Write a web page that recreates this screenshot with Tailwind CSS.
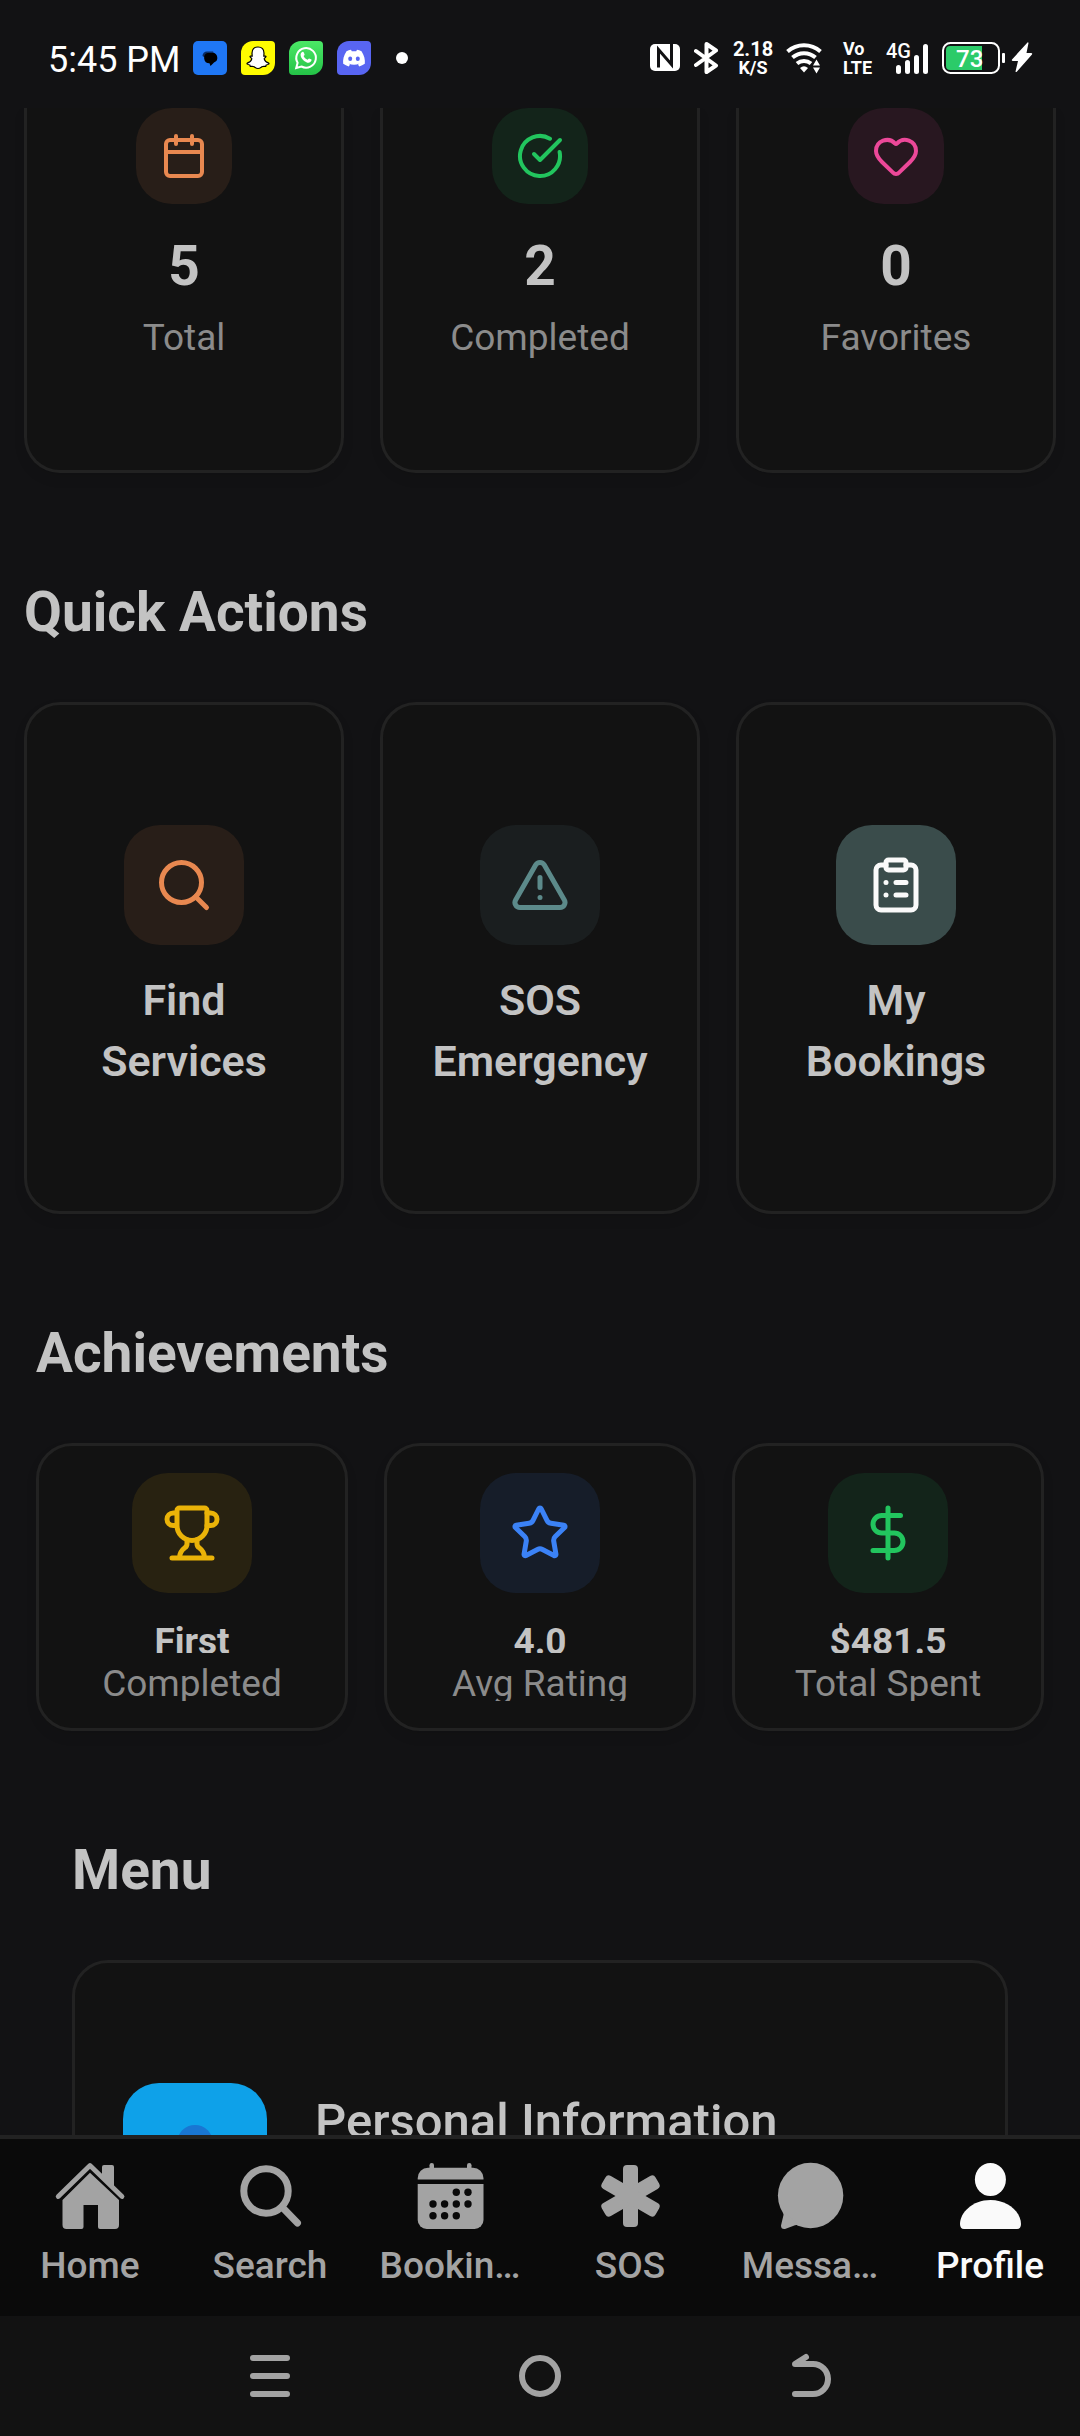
<!DOCTYPE html>
<html lang="en">
<head>
<meta charset="utf-8">
<meta name="viewport" content="width=device-width, initial-scale=1">
<title>Profile</title>
<script src="https://cdn.jsdelivr.net/npm/@tailwindcss/browser@4"></script>
</head>
<body class="flex h-screen flex-col overflow-hidden bg-[#121214] font-['Roboto',sans-serif] text-[#c3c3c3]">

<!-- Status bar -->
<header class="flex h-[108px] shrink-0 items-center justify-between pt-2 pr-[47px] pl-12 text-white">
  <div class="flex items-center gap-[14px]">
    <time class="w-[131px] pt-1 text-[36px] leading-[42px] whitespace-nowrap">5:45 PM</time>
    <svg class="h-[34px] w-[34px]" viewBox="0 0 34 34"><rect width="34" height="34" rx="5" fill="#1f77f5"/><path d="M9.500 15a4.500 4.500 0 0 1 4.500-4.500h6l.8 1.300h-6.300l-3 4.500z" fill="#0a2a60"/><path d="M15 11.800h4.500a5 5 0 0 1 1.500 9.700l-3.500 3.500-1-2.800a5.300 5.300 0 0 1-1.500-10.400z" fill="#000"/></svg>
    <svg class="h-[34px] w-[34px]" viewBox="0 0 34 34"><path d="M12 0H30a4 4 0 0 1 4 4V22a12 12 0 0 1-12 12H4a4 4 0 0 1-4-4V12A12 12 0 0 1 12 0z" fill="#fffc00"/><path d="M17 6c4 0 6 2.500 6 6.200l-.2 3c.8.2 1.900-.6 2.200.2.400 1-2 1.400-1.800 2.400.6 2.200 2.500 3.800 4.600 4.400.6.400-.2 1.400-2.600 1.800l-.5 1.400c-1.200.2-2.400-.4-3.900.4-1.200.8-2.200 1.700-3.800 1.700s-2.600-.9-3.800-1.700c-1.500-.8-2.700-.2-3.900-.4L8.800 24c-2.400-.4-3.200-1.400-2.600-1.800 2.100-.6 4-2.200 4.600-4.400.2-1-2.200-1.400-1.800-2.400.3-.8 1.400 0 2.200-.2l-.2-3C11 8.500 13 6 17 6z" fill="#fff" stroke="#000" stroke-width="1.200"/></svg>
    <svg class="h-[34px] w-[34px]" viewBox="0 0 34 34"><defs><linearGradient id="wa" x2="0" y2="1"><stop stop-color="#4be866"/><stop offset="1" stop-color="#24c247"/></linearGradient></defs><path d="M12 0H30a4 4 0 0 1 4 4V22a12 12 0 0 1-12 12H4a4 4 0 0 1-4-4V12A12 12 0 0 1 12 0z" fill="url(#wa)"/><path d="M7.200 27l1.400-5.200a9.800 9.800 0 1 1 3.800 3.700z" fill="none" stroke="#fff" stroke-width="2"/><path d="M12.500 11.500c1-1.200 2-1 2.400.2l.7 1.700c.1.600-.8 1.300-1 1.700.8 1.700 2 2.800 3.900 3.600.6-.3 1.100-1.400 1.600-1.300l2.400 1.200c.5.800-.8 3.100-2.900 3.200-3.200-.1-8-4.400-8-7.900 0-.9.400-1.900.9-2.400z" fill="#fff"/></svg>
    <svg class="h-[34px] w-[34px]" viewBox="0 0 34 34"><path d="M12 0H30a4 4 0 0 1 4 4V22a12 12 0 0 1-12 12H4a4 4 0 0 1-4-4V12A12 12 0 0 1 12 0z" fill="#5865f2"/><path d="M9.500 10.200A18 18 0 0 1 14 8.800l.8 1.500a17 17 0 0 1 4.400 0L20 8.800a18 18 0 0 1 4.500 1.400c2.800 4.200 3.800 8.300 3.300 12.600a18 18 0 0 1-5.600 2.700l-1.200-2 1.500-.9c-3.600 1.600-7.400 1.600-11 0l1.500.9-1.200 2a18 18 0 0 1-5.600-2.700c-.5-4.300.5-8.400 3.300-12.600z" fill="#fff"/><ellipse cx="13.200" cy="17.800" rx="2" ry="2.300" fill="#5865f2"/><ellipse cx="20.800" cy="17.800" rx="2" ry="2.300" fill="#5865f2"/></svg>
    <span class="ml-[11px] h-3 w-3 rounded-full bg-white"></span>
  </div>

  <div class="flex items-center gap-[14px]">
    <svg class="h-8 w-[30px]" viewBox="0 0 30 32"><rect y="2" width="30" height="27" rx="5" fill="#fff"/><path d="M8.500 25.500V7.500L21.500 22.500V2" fill="none" stroke="#121214" stroke-width="3"/></svg>
    <svg class="h-8 w-[26px]" viewBox="0 0 26 32"><path d="M2 9l20 14.500-9.500 6.500V2l9.500 6.500L2 23" fill="none" stroke="#fff" stroke-width="4" stroke-linejoin="round" stroke-linecap="round"/></svg>
    <div class="flex w-[38px] flex-col items-center font-bold">
      <span class="text-[20px] leading-[18px]">2.18</span>
      <span class="text-[18px] leading-[19px]">K/S</span>
    </div>
    <svg class="h-8 w-[43px]" viewBox="0 0 43 32"><g fill="none" stroke="#fff" stroke-width="4"><path d="M1.500 9.500a25 25 0 0 1 33 0"/><path d="M6.500 15.500a17.500 17.500 0 0 1 23 0"/><path d="M11 21.500a11 11 0 0 1 14 0"/></g><path d="M14 26q4-3.500 8 0l-4 4.500z" fill="#fff"/><path d="M30.500 17.500l3.500 6h-7zM30.500 31.500l-3.500-6h7z" fill="#fff"/></svg>
    <div class="flex w-[29px] flex-col font-bold">
      <span class="text-[18px] leading-[18px]">Vo</span>
      <span class="text-[18px] leading-[19px]">LTE</span>
    </div>
    <div class="relative h-8 w-[42px]">
      <span class="absolute top-0 right-[17px] text-[20px] leading-[18px] font-medium">4G</span>
      <svg class="h-8 w-[42px]" viewBox="0 0 42 32" fill="#fff"><rect x="10" y="23" width="5" height="9" rx="2.500"/><rect x="19" y="18" width="5" height="14" rx="2.500"/><rect x="28" y="13" width="5" height="19" rx="2.500"/><rect x="37" y="2" width="5" height="30" rx="2.500"/></svg>
    </div>
    <div class="flex items-center gap-[6px]">
      <div class="relative h-8 w-[63px]">
        <svg class="h-8 w-[63px]" viewBox="0 0 63 32"><rect x="1" y="1" width="56" height="30" rx="7.500" fill="none" stroke="#fff" stroke-width="2"/><path d="M8 4H40V28H8a4 4 0 0 1-4-4V8a4 4 0 0 1 4-4z" fill="#2bcb69"/><rect x="60" y="11" width="3" height="10" rx="1" fill="#fff"/></svg>
        <span class="absolute top-0 left-[14px] text-[24px] leading-[34px] font-medium">73</span>
      </div>
      <svg class="h-8 w-[22px]" viewBox="0 0 22 32"><path d="M16.500 0.500L1 17.500q-.8 1.500 1 1.500h5L4.500 29.500q.5 1 1.500 0L21 12.500q.8-1.500-1-1.500h-4.500L17.500 1q-.2-1-1-.5z" fill="#fff"/></svg>
    </div>
  </div>
</header>

<!-- Scrolling content -->
<main class="min-h-0 flex-1 overflow-hidden">

  <section class="px-6">
    <ul class="grid grid-cols-3 gap-9">
      <li class="flex flex-col items-center rounded-b-[36px] border-3 border-t-0 border-[#222222] bg-[#121212] pb-[108px] shadow-[0_6px_12px_rgba(0,0,0,0.08)]">
        <span class="flex h-24 w-24 items-center justify-center rounded-[36px] bg-[#e88850]/10 text-[#e88850]">
          <svg class="h-12 w-12" viewBox="0 0 24 24" fill="none" stroke="currentColor" stroke-width="2" stroke-linecap="round" stroke-linejoin="round"><path d="M8 2v4M16 2v4"/><rect x="3" y="4" width="18" height="18" rx="2"/><path d="M3 10h18"/></svg>
        </span>
        <strong class="mt-[26px] text-[55px] leading-[72px] font-bold">5</strong>
        <span class="mt-3 text-[37px] leading-[48px] text-[#8b8b8b]">Total</span>
      </li>
      <li class="flex flex-col items-center rounded-b-[36px] border-3 border-t-0 border-[#222222] bg-[#121212] pb-[108px] shadow-[0_6px_12px_rgba(0,0,0,0.08)]">
        <span class="flex h-24 w-24 items-center justify-center rounded-[36px] bg-[#22c55e]/10 text-[#22c55e]">
          <svg class="h-12 w-12" viewBox="0 0 24 24" fill="none" stroke="currentColor" stroke-width="2" stroke-linecap="round" stroke-linejoin="round"><path d="M21.801 10A10 10 0 1 1 17 3.335"/><path d="m9 11 3 3L22 4"/></svg>
        </span>
        <strong class="mt-[26px] text-[55px] leading-[72px] font-bold">2</strong>
        <span class="mt-3 text-[37px] leading-[48px] text-[#8b8b8b]">Completed</span>
      </li>
      <li class="flex flex-col items-center rounded-b-[36px] border-3 border-t-0 border-[#222222] bg-[#121212] pb-[108px] shadow-[0_6px_12px_rgba(0,0,0,0.08)]">
        <span class="flex h-24 w-24 items-center justify-center rounded-[36px] bg-[#ec4899]/10 text-[#ec4899]">
          <svg class="h-12 w-12" viewBox="0 0 24 24" fill="none" stroke="currentColor" stroke-width="2" stroke-linecap="round" stroke-linejoin="round"><path d="M2 9.500a5.500 5.500 0 0 1 9.591-3.676.56.56 0 0 0 .818 0A5.490 5.490 0 0 1 22 9.500c0 2.290-1.500 4-3 5.500l-5.492 5.313a2 2 0 0 1-3 .019L5 15c-1.500-1.500-3-3.200-3-5.500"/></svg>
        </span>
        <strong class="mt-[26px] text-[55px] leading-[72px] font-bold">0</strong>
        <span class="mt-3 text-[37px] leading-[48px] text-[#8b8b8b]">Favorites</span>
      </li>
    </ul>
  </section>

  <section class="mt-[103px] px-6">
    <h2 class="text-[55px] leading-[72px] font-bold">Quick Actions</h2>
    <div class="mt-[54px] grid grid-cols-3 gap-9">
      <button type="button" class="flex flex-col items-center rounded-[36px] border-3 border-[#222222] bg-[#121212] px-9 pt-[120px] pb-[119px] shadow-[0_6px_12px_rgba(0,0,0,0.08)]">
        <span class="flex h-30 w-30 items-center justify-center rounded-[36px] bg-[#e88850]/10 text-[#e88850]">
          <svg class="h-15 w-15" viewBox="0 0 24 24" fill="none" stroke="currentColor" stroke-width="2" stroke-linecap="round" stroke-linejoin="round"><circle cx="11" cy="11" r="8"/><path d="m21 21-4.340-4.340"/></svg>
        </span>
        <span class="mt-[25px] text-[43px] leading-[61px] font-semibold">Find<br>Services</span>
      </button>
      <button type="button" class="flex flex-col items-center rounded-[36px] border-3 border-[#222222] bg-[#121212] px-9 pt-[120px] pb-[119px] shadow-[0_6px_12px_rgba(0,0,0,0.08)]">
        <span class="flex h-30 w-30 items-center justify-center rounded-[36px] bg-[#1a1e1f] text-[#5c8a8a]">
          <svg class="h-15 w-15" viewBox="0 0 24 24" fill="none" stroke="currentColor" stroke-width="2" stroke-linecap="round" stroke-linejoin="round"><path d="m21.730 18-8-14a2 2 0 0 0-3.480 0l-8 14A2 2 0 0 0 4 21h16a2 2 0 0 0 1.730-3"/><path d="M12 9v4M12 17h.01"/></svg>
        </span>
        <span class="mt-[25px] text-[43px] leading-[61px] font-semibold">SOS<br>Emergency</span>
      </button>
      <button type="button" class="flex flex-col items-center rounded-[36px] border-3 border-[#222222] bg-[#121212] px-9 pt-[120px] pb-[119px] shadow-[0_6px_12px_rgba(0,0,0,0.08)]">
        <span class="flex h-30 w-30 items-center justify-center rounded-[36px] bg-[#3a4c4b] text-[#fafafa]">
          <svg class="h-15 w-15" viewBox="0 0 24 24" fill="none" stroke="currentColor" stroke-width="2" stroke-linecap="round" stroke-linejoin="round"><rect x="8" y="2" width="8" height="4" rx="1"/><path d="M16 4h2a2 2 0 0 1 2 2v14a2 2 0 0 1-2 2H6a2 2 0 0 1-2-2V6a2 2 0 0 1 2-2h2M12 11h4M12 16h4M8 11h.01M8 16h.01"/></svg>
        </span>
        <span class="mt-[25px] text-[43px] leading-[61px] font-semibold">My<br>Bookings</span>
      </button>
    </div>
  </section>

  <section class="mt-[103px] px-9">
    <h2 class="text-[55px] leading-[72px] font-bold">Achievements</h2>
    <ul class="mt-[54px] grid grid-cols-3 gap-9">
      <li class="flex flex-col items-center rounded-[36px] border-3 border-[#222222] bg-[#121212] py-[27px] shadow-[0_6px_12px_rgba(0,0,0,0.08)]">
        <span class="flex h-30 w-30 items-center justify-center rounded-[36px] bg-[#eab308]/10 text-[#eab308]">
          <svg class="h-15 w-15" viewBox="0 0 24 24" fill="none" stroke="currentColor" stroke-width="2" stroke-linecap="round" stroke-linejoin="round"><path d="M10 14.660v1.626a2 2 0 0 1-.976 1.696A5 5 0 0 0 7 21.978M14 14.660v1.626a2 2 0 0 0 .976 1.696A5 5 0 0 1 17 21.978M18 9h1.500a1 1 0 0 0 0-5H18M4 22h16"/><path d="M6 9a6 6 0 0 0 12 0V3a1 1 0 0 0-1-1H7a1 1 0 0 0-1 1zM6 9H4.500a1 1 0 0 1 0-5H6"/></svg>
        </span>
        <strong class="mt-6 h-9 overflow-hidden text-[37px] leading-[50px] font-bold">First</strong>
        <span class="mt-3 h-9 overflow-hidden text-[37px] leading-[38px] text-[#8b8b8b]">Completed</span>
      </li>
      <li class="flex flex-col items-center rounded-[36px] border-3 border-[#222222] bg-[#121212] py-[27px] shadow-[0_6px_12px_rgba(0,0,0,0.08)]">
        <span class="flex h-30 w-30 items-center justify-center rounded-[36px] bg-[#3b82f6]/10 text-[#3b82f6]">
          <svg class="h-15 w-15" viewBox="0 0 24 24" fill="none" stroke="currentColor" stroke-width="2" stroke-linecap="round" stroke-linejoin="round"><path d="M11.525 2.295a.53.53 0 0 1 .95 0l2.310 4.679a2.123 2.123 0 0 0 1.595 1.160l5.166.756a.53.53 0 0 1 .294.904l-3.736 3.638a2.123 2.123 0 0 0-.611 1.878l.882 5.140a.53.53 0 0 1-.771.560l-4.618-2.428a2.122 2.122 0 0 0-1.973 0L6.396 21.010a.53.53 0 0 1-.77-.56l.881-5.139a2.122 2.122 0 0 0-.611-1.879L2.160 9.795a.53.53 0 0 1 .294-.906l5.165-.755a2.122 2.122 0 0 0 1.597-1.160z"/></svg>
        </span>
        <strong class="mt-6 h-9 overflow-hidden text-[37px] leading-[50px] font-bold">4.0</strong>
        <span class="mt-3 h-9 overflow-hidden text-[37px] leading-[38px] text-[#8b8b8b]">Avg Rating</span>
      </li>
      <li class="flex flex-col items-center rounded-[36px] border-3 border-[#222222] bg-[#121212] py-[27px] shadow-[0_6px_12px_rgba(0,0,0,0.08)]">
        <span class="flex h-30 w-30 items-center justify-center rounded-[36px] bg-[#22c55e]/10 text-[#22c55e]">
          <svg class="h-15 w-15" viewBox="0 0 24 24" fill="none" stroke="currentColor" stroke-width="2" stroke-linecap="round" stroke-linejoin="round"><path d="M12 2v20M17 5H9.500a3.500 3.500 0 0 0 0 7h5a3.500 3.500 0 0 1 0 7H6"/></svg>
        </span>
        <strong class="mt-6 h-9 overflow-hidden text-[37px] leading-[50px] font-bold">$481.5</strong>
        <span class="mt-3 h-9 overflow-hidden text-[37px] leading-[38px] text-[#8b8b8b]">Total Spent</span>
      </li>
    </ul>
  </section>

  <section class="mt-[103px] px-[72px]">
    <h2 class="text-[55px] leading-[72px] font-bold">Menu</h2>
    <a href="#personal" class="mt-[54px] flex items-start gap-12 rounded-[36px] border-3 border-[#222222] bg-[#121212] px-12 py-[120px]">
      <span class="flex h-36 w-36 items-center justify-center rounded-[36px] bg-[#0ea1e9] text-[#1976d2]">
        <svg class="h-18 w-18" viewBox="0 0 72 72" fill="currentColor"><circle cx="36" cy="24" r="18"/><path d="M4 68c0-14 14-22 32-22s32 8 32 22z"/></svg>
      </span>
      <span class="text-[49px] leading-[77px] font-medium">Personal Information</span>
    </a>
  </section>
</main>

<!-- Tab bar -->
<nav aria-label="Main" class="grid shrink-0 grid-cols-6 border-t-4 border-[#222222] bg-[#0a0a0a] pt-[21px] pb-[26px] text-[#a3a3a3]">
  <a href="#home" class="flex flex-col items-center gap-[10px]">
    <svg class="h-18 w-18" viewBox="0 0 72 72" fill="currentColor"><path d="M48 7a2 2 0 0 1 2-2h8a2 2 0 0 1 2 2v20L48 16z"/><path d="M4.200 36.500L36 5.500 68 36.500" fill="none" stroke="currentColor" stroke-width="4.800" stroke-linecap="round" stroke-linejoin="round"/><path d="M36 12.800L65 40V65a4 4 0 0 1-4 4H46a2 2 0 0 1-2-2V45H29.500V67a2 2 0 0 1-2 2H12.500a4 4 0 0 1-4-4V40z"/></svg>
    <span class="text-[37px] leading-[48px] font-medium">Home</span>
  </a>
  <a href="#search" class="flex flex-col items-center gap-[10px]">
    <svg class="h-18 w-18" viewBox="0 0 72 72" fill="none" stroke="currentColor" stroke-width="7" stroke-linecap="round"><circle cx="32" cy="31" r="22.200"/><path d="M48 47L63.500 63"/></svg>
    <span class="text-[37px] leading-[48px] font-medium">Search</span>
  </a>
  <a href="#bookings" class="flex flex-col items-center gap-[10px]">
    <svg class="h-18 w-18" viewBox="0 0 72 72" fill="currentColor"><rect x="15.500" y="3" width="4.500" height="8" rx="2.200"/><rect x="53" y="3" width="4.500" height="8" rx="2.200"/><path d="M14 7.700H59a10.500 10.500 0 0 1 10.500 10.500V19.500H3.700V18.200A10.500 10.500 0 0 1 14 7.700z"/><path d="M3.700 24H69.500V60a9 9 0 0 1-9 9H12.700a9 9 0 0 1-9-9z"/><g fill="#0a0a0a"><circle cx="42.300" cy="32.300" r="3.700"/><circle cx="54" cy="32.300" r="3.700"/><circle cx="19" cy="44" r="3.700"/><circle cx="30.600" cy="44" r="3.700"/><circle cx="42.300" cy="44" r="3.700"/><circle cx="54" cy="44" r="3.700"/><circle cx="19" cy="55.700" r="3.700"/><circle cx="30.600" cy="55.700" r="3.700"/><circle cx="42.300" cy="55.700" r="3.700"/></g></svg>
    <span class="text-[37px] leading-[48px] font-medium">Bookin…</span>
  </a>
  <a href="#sos" class="flex flex-col items-center gap-[10px]">
    <svg class="h-18 w-18" viewBox="0 0 72 72" fill="currentColor"><rect x="29" y="5" width="15" height="62" rx="4"/><rect x="29" y="5" width="15" height="62" rx="4" transform="rotate(60 36.500 36)"/><rect x="29" y="5" width="15" height="62" rx="4" transform="rotate(-60 36.500 36)"/></svg>
    <span class="text-[37px] leading-[48px] font-medium">SOS</span>
  </a>
  <a href="#messages" class="flex flex-col items-center gap-[10px]">
    <svg class="h-18 w-18" viewBox="0 0 72 72" fill="currentColor"><circle cx="36.600" cy="35.500" r="32.700"/><path d="M9 51q1 2 .5 4L7 65.500q0 4 4 3.500l10-3.700q2-.6 5 .5z"/></svg>
    <span class="text-[37px] leading-[48px] font-medium">Messa…</span>
  </a>
  <a href="#profile" aria-current="page" class="flex flex-col items-center gap-[10px] text-[#fafafa]">
    <svg class="h-18 w-18" viewBox="0 0 72 72" fill="currentColor"><ellipse cx="36.400" cy="19.500" rx="15.500" ry="16.500"/><path d="M6 64C6 53 18 40 36.500 40S67 53 67 64q0 5-4 5H10q-4 0-4-5z"/></svg>
    <span class="text-[37px] leading-[48px] font-medium">Profile</span>
  </a>
</nav>

<!-- System navigation -->
<footer class="grid h-[120px] shrink-0 grid-cols-3 items-center bg-[#121212] px-[12.5%] text-[#a3a3a3]">
  <button type="button" aria-label="Recent apps" class="flex justify-center"><svg class="h-12 w-12" viewBox="0 0 48 48" fill="none" stroke="currentColor" stroke-width="6" stroke-linecap="round"><path d="M7 6H41M7 24H41M7 42H41"/></svg></button>
  <button type="button" aria-label="Home screen" class="flex justify-center"><svg class="h-12 w-12" viewBox="0 0 48 48" fill="none" stroke="currentColor" stroke-width="6"><circle cx="24" cy="24" r="18"/></svg></button>
  <button type="button" aria-label="Back" class="flex justify-center"><svg class="h-12 w-12" viewBox="0 0 48 48" fill="none" stroke="currentColor" stroke-width="6" stroke-linecap="round" stroke-linejoin="round"><path d="M9 42H27a15 15 0 0 0 0-30H9L20 5"/></svg></button>
</footer>
</body>
</html>
